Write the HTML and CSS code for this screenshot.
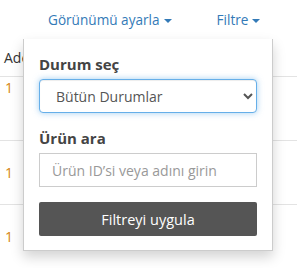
FILE: index.html
```html
<!DOCTYPE html>
<html lang="tr">
<head>
  <meta charset="UTF-8" />
  <meta name="viewport" content="width=device-width, initial-scale=1.0"/>
  <title>Ürünler</title>
  <link rel="stylesheet" href="styles.css">
</head>
<body>
  <div class="toolbar">
    <a class="toggle" href="#">Görünümü ayarla<span class="caret"></span></a>
    <div class="filter-wrap">
      <a class="toggle" href="#">Filtre<span class="caret"></span></a>
    </div>
  </div>

  <div class="table">
    <div class="row head">Adet</div>
    <div class="row first"><span class="qty">1</span></div>
    <div class="row"><span class="qty">1</span></div>
    <div class="row"><span class="qty">1</span></div>
  </div>

  <div class="dropdown">
    <label for="status">Durum seç</label>
    <select id="status" class="focused">
      <option>Bütün Durumlar</option>
      <option>Aktif</option>
      <option>Pasif</option>
    </select>

    <label for="search">Ürün ara</label>
    <input type="text" id="search" placeholder="Ürün ID’si veya adını girin">

    <button class="apply-btn">Filtreyi uygula</button>
  </div>
</body>
</html>
```

FILE: styles.css
```css
* {
  box-sizing: border-box;
}

body {
  font-family: 'Open Sans', sans-serif;
  font-size: 14px;
  color: #333;
  background: #fff;
  margin: 0;
  width: 297px;
  height: 268px;
  overflow: hidden;
  position: relative;
}

.toolbar {
  display: flex;
  height: 40px;
  padding: 10px 0 0 48px;
  gap: 45px;
}

.toggle {
  color: #337ab7;
  text-decoration: none;
  font-size: 13.6px;
  line-height: 20px;
}

.caret {
  display: inline-block;
  width: 0;
  height: 0;
  margin-left: 4px;
  vertical-align: middle;
  border-top: 4px solid #337ab7;
  border-left: 4px solid transparent;
  border-right: 4px solid transparent;
}

.row {
  height: 64px;
  border-top: 1px solid #e3e3e3;
  padding: 0 0 0 5px;
  line-height: 20px;
  display: flex;
  align-items: center;
}

.row.head {
  height: 37px;
  border-top: none;
  align-items: flex-start;
  padding: 8px 0 0 4px;
  border-bottom: 1px solid #e3e3e3;
}

.row.first {
  border-top: none;
  height: 63px;
  align-items: flex-start;
  padding-top: 1px;
}

.qty {
  color: #d58512;
}

.dropdown {
  position: absolute;
  left: 23px;
  top: 39px;
  width: 250px;
  background: #fff;
  border: 1px solid #ccc;
  border-top: none;
  box-shadow: 0 6px 12px rgba(0, 0, 0, 0.175);
  padding: 15px 15px 14px 15px;
  display: flex;
  flex-direction: column;
}

.dropdown label {
  font-weight: bold;
  font-size: 15px;
  color: #444;
  line-height: 20px;
  margin-bottom: 5px;
}

select, input {
  font-family: 'Open Sans', sans-serif;
  font-size: 14px;
  height: 34px;
  width: 100%;
  color: #555;
  background: #fff;
}

select {
  border: 1px solid #66afe9;
  border-radius: 4px;
  padding: 0 12px;
  margin-bottom: 15px;
  box-shadow: inset 0 1px 1px rgba(0, 0, 0, 0.075), 0 0 6px rgba(102, 175, 233, 0.6);
  outline: none;
}

input {
  border: 1px solid #ccc;
  border-radius: 0;
  padding: 0 12px;
  margin-bottom: 15px;
}

input::placeholder {
  color: #999;
}

.apply-btn {
  height: 34px;
  background: #555;
  color: #fff;
  border: none;
  border-radius: 2px;
  font-family: 'Open Sans', sans-serif;
  font-size: 14.5px;
  cursor: pointer;
}
```
